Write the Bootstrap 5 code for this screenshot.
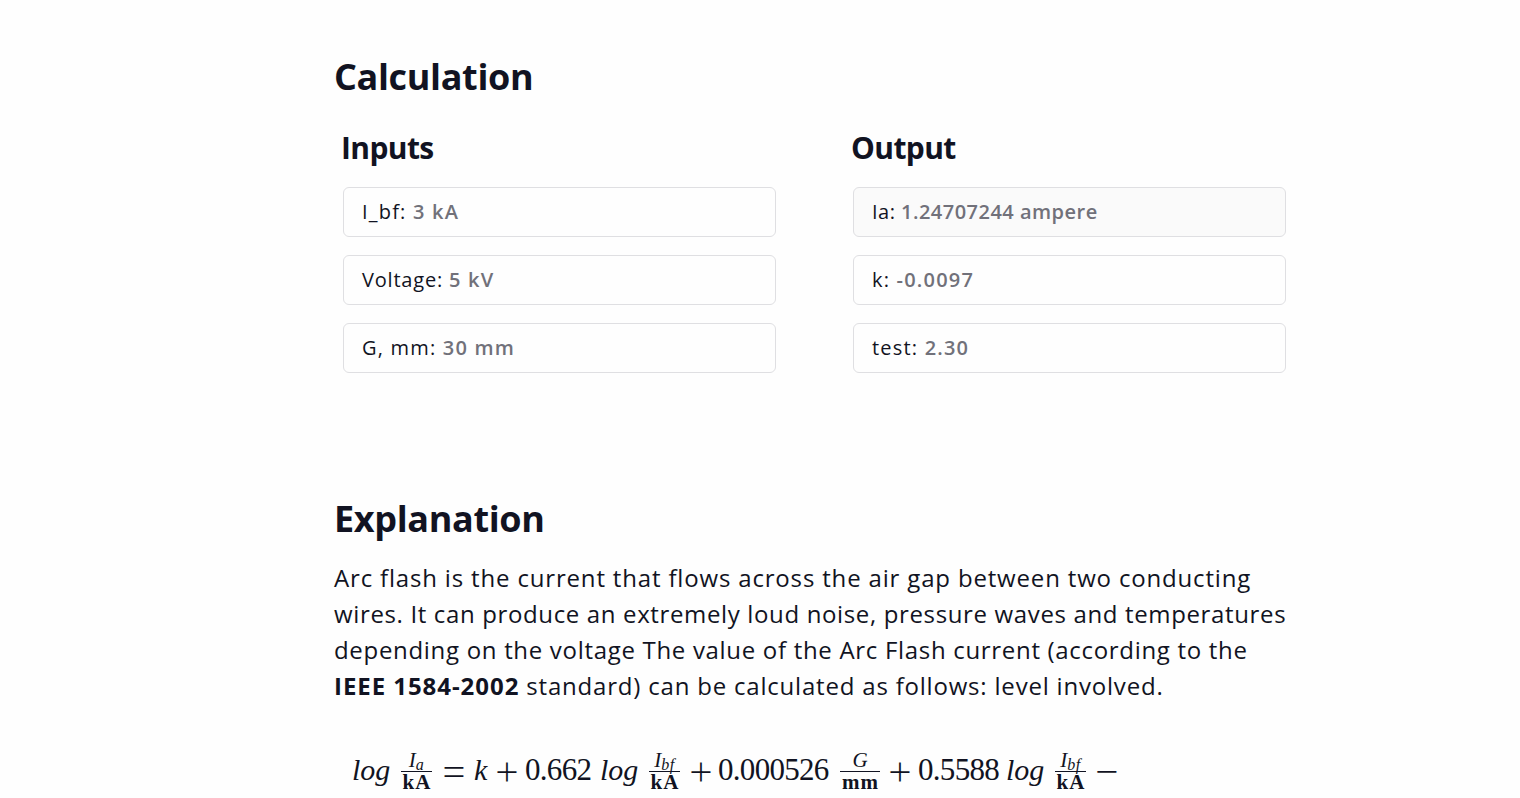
<!DOCTYPE html>
<html lang="en">
<head>
    <meta charset="utf-8">
    <title>Arc Flash Calculation</title>
    <link rel="stylesheet" href="https://cdn.jsdelivr.net/npm/bootstrap@5.3.3/dist/css/bootstrap.min.css">
    <style>
        body {
            font-family: "Open Sans", sans-serif;
            color: #111322;
            background: #fefefe;
            overflow: hidden;
        }
        .page {
            width: 952px;
            margin-left: 334px;
            padding-top: 53px;
        }
        h2 {
            font-size: 36px;
            font-weight: 700;
            line-height: 48px;
            letter-spacing: -0.35px;
        }
        h3 {
            font-size: 30px;
            font-weight: 700;
            line-height: 40px;
            letter-spacing: -0.6px;
            margin: 0 0 19px -2px;
        }
        .panels {
            margin: 27px 0 0 9px;
            gap: 77px;
        }
        .panel {
            width: 433px;
        }
        .value-box {
            height: 50px;
            margin-bottom: 18px;
            padding-left: 18px;
            border: 1px solid #dfdfe2;
            border-radius: 6px;
            font-size: 20px;
            letter-spacing: 1.2px;
            white-space: pre;
        }
        .value-box b {
            font-weight: 600;
            color: #71717a;
        }
        .value-box.result {
            background: #fafafa;
            letter-spacing: 0.48px;
        }
        .explanation {
            margin-top: 104px;
        }
        .explanation p {
            font-size: 24px;
            line-height: 36px;
            margin: 17px 0 0;
            white-space: nowrap;
        }
        .ls-1 { letter-spacing: 0.83px; }
        .ls-2 { letter-spacing: 0.64px; }
        .ls-3 { letter-spacing: 0.69px; }
        .ls-4 { letter-spacing: 0.8px; }
        .explanation p b { letter-spacing: 0.95px; }

        .formula {
            margin: 39px 0 0 18px;
            height: 54px;
            font: 30px/54px "Liberation Serif", serif;
            white-space: nowrap;
        }
        .t-log { width: 49px; }
        .t-k { width: 22px; }
        .t-num {
            font-size: 31px;
            letter-spacing: -0.7px;
        }
        .op {
            width: 22px;
            font: 300 41px/54px "Open Sans", sans-serif;
            display: flex;
            justify-content: center;
        }
        .frac {
            width: 31px;
            font-size: 21px;
            text-align: center;
        }
        .frac .num {
            height: 29px;
            line-height: 34px;
            border-bottom: 1px solid #111322;
            font-style: italic;
        }
        .frac .num small {
            font-size: 16px;
            letter-spacing: 0.5px;
            position: relative;
            top: 3px;
        }
        .frac .den {
            display: flex;
            justify-content: center;
            font-weight: 700;
            font-size: 21px;
            letter-spacing: 1px;
            margin-right: -1px;
            line-height: 20px;
        }
        .frac.wide { width: 40px; }
    </style>
</head>
<body>
    <main class="page">
        <section>
            <h2 class="mb-0">Calculation</h2>
            <div class="panels d-flex">
                <div class="panel">
                    <h3>Inputs</h3>
                    <div class="value-box d-flex align-items-center"><span>I_bf: </span><b>3 kA</b></div>
                    <div class="value-box d-flex align-items-center"><span class="ls-4">Voltage: </span><b>5 kV</b></div>
                    <div class="value-box d-flex align-items-center"><span>G, mm: </span><b>30 mm</b></div>
                </div>
                <div class="panel">
                    <h3>Output</h3>
                    <div class="value-box result d-flex align-items-center"><span>Ia: </span><b>1.24707244 ampere</b></div>
                    <div class="value-box d-flex align-items-center"><span>k: </span><b>-0.0097</b></div>
                    <div class="value-box d-flex align-items-center"><span>test: </span><b>2.30</b></div>
                </div>
            </div>
        </section>
        <section class="explanation">
            <h2 class="mb-0">Explanation</h2>
            <p>
                <span class="ls-1">Arc flash is the current that flows across the air gap between two conducting</span><br>
                <span class="ls-2">wires. It can produce an extremely loud noise, pressure waves and temperatures</span><br>
                <span class="ls-3">depending on the voltage The value of the Arc Flash current (according to the</span><br>
                <b>IEEE 1584-2002</b><span class="ls-4"> standard) can be calculated as follows: level involved.</span>
            </p>
            <div class="formula d-flex">
                <i class="t-log">log</i>
                <div class="frac"><div class="num">I<small>a</small></div><div class="den">kA</div></div>
                <span class="op" style="margin-left: 11px">=</span>
                <i class="t-k" style="margin-left: 9px">k</i>
                <span class="op">+</span>
                <span class="t-num" style="width: 75px; margin-left: 7px">0.662</span>
                <i class="t-log">log</i>
                <div class="frac"><div class="num">I<small>bf</small></div><div class="den">kA</div></div>
                <span class="op" style="margin-left: 10px">+</span>
                <span class="t-num" style="width: 122px; margin-left: 6px">0.000526</span>
                <div class="frac wide"><div class="num">G</div><div class="den">mm</div></div>
                <span class="op" style="margin-left: 9px">+</span>
                <span class="t-num" style="width: 88px; margin-left: 7px">0.5588</span>
                <i class="t-log">log</i>
                <div class="frac"><div class="num">I<small>bf</small></div><div class="den">kA</div></div>
                <span class="op" style="margin-left: 10px">−</span>
            </div>
        </section>
    </main>
    <script src="https://cdn.jsdelivr.net/npm/bootstrap@5.3.3/dist/js/bootstrap.bundle.min.js"></script>
</body>
</html>
